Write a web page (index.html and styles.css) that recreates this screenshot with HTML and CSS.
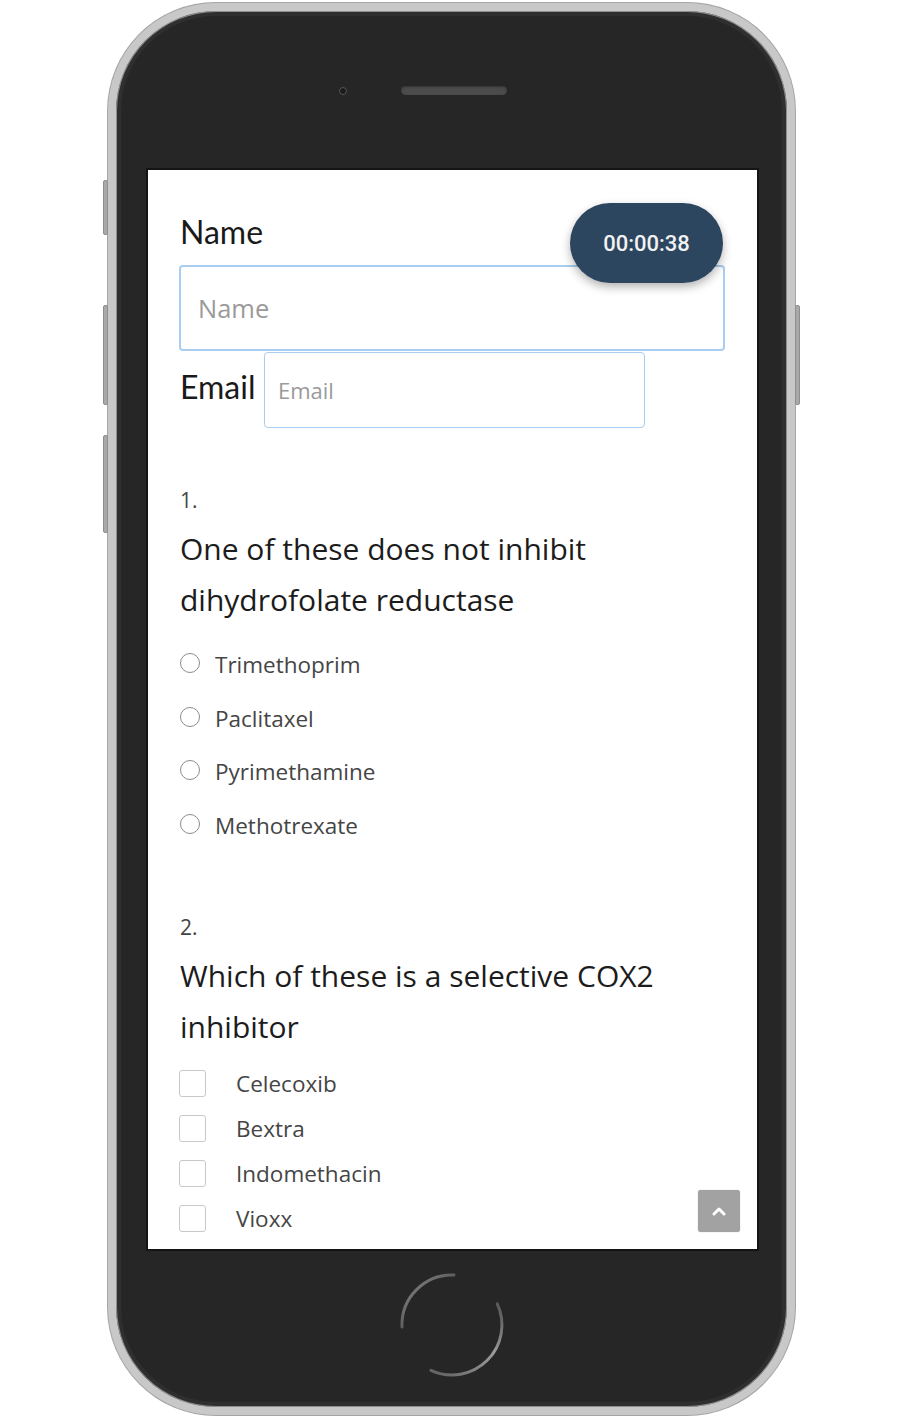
FILE: index.html
```html
<!DOCTYPE html>
<html lang="en">
<head>
<meta charset="utf-8">
<title>Quiz</title>
<link rel="stylesheet" href="styles.css">
</head>
<body>
<div class="phone">
  <span class="side-btn side-l1"></span>
  <span class="side-btn side-l2"></span>
  <span class="side-btn side-l3"></span>
  <span class="side-btn side-r1"></span>
  <div class="bezel-top">
    <span class="camera"></span>
    <span class="speaker"></span>
  </div>
  <div class="screen">
    <div class="timer">00:00:38</div>
    <label class="field-label">Name</label>
    <div class="input input-name">Name</div>
    <div class="email-row">
      <label class="field-label email-label">Email</label>
      <div class="input input-email">Email</div>
    </div>

    <div class="q-num q1">1.</div>
    <div class="q-text">One of these does not inhibit dihydrofolate reductase</div>
    <ul class="options radios">
      <li><span class="radio"></span>Trimethoprim</li>
      <li><span class="radio"></span>Paclitaxel</li>
      <li><span class="radio"></span>Pyrimethamine</li>
      <li><span class="radio"></span>Methotrexate</li>
    </ul>

    <div class="q-num q2">2.</div>
    <div class="q-text">Which of these is a selective COX2 inhibitor</div>
    <ul class="options checks">
      <li><span class="check"></span>Celecoxib</li>
      <li><span class="check"></span>Bextra</li>
      <li><span class="check"></span>Indomethacin</li>
      <li><span class="check"></span>Vioxx</li>
    </ul>

    <div class="to-top">
      <svg width="16" height="10" viewBox="0 0 16 10"><polyline points="3,8 8,3 13,8" fill="none" stroke="#fff" stroke-width="3" stroke-linecap="round" stroke-linejoin="round"/></svg>
    </div>
  </div>
  <div class="bezel-bottom">
    <svg class="home" width="120" height="120" viewBox="0 0 120 120">
      <defs>
        <linearGradient id="g1" x1="0" y1="0" x2="1" y2="1">
          <stop offset="0" stop-color="#8a8a8a"/>
          <stop offset="1" stop-color="#8a8a8a" stop-opacity="0.15"/>
        </linearGradient>
        <linearGradient id="g2" x1="1" y1="0" x2="0" y2="1">
          <stop offset="0" stop-color="#9a9a9a" stop-opacity="0.4"/>
          <stop offset="0.4" stop-color="#9a9a9a"/>
          <stop offset="1" stop-color="#9a9a9a" stop-opacity="0.5"/>
        </linearGradient>
      </defs>
      <path d="M62,10 A50,50 0 0 0 10,62" fill="none" stroke="url(#g1)" stroke-width="3" stroke-linecap="round"/>
      <path d="M105.3,38.9 A50,50 0 0 1 38.9,105.3" fill="none" stroke="url(#g2)" stroke-width="3" stroke-linecap="round"/>
    </svg>
  </div>
</div>
</body>
</html>
```

FILE: styles.css
```css
* { box-sizing: border-box; }
html, body { margin: 0; padding: 0; background: #fff; }
body { width: 900px; height: 1418px; overflow: hidden; }

.phone {
  position: relative;
  margin: 3px 0 0 108px;
  width: 687px;
  height: 1412px;
  border: 8px solid #c8c8c8;
  border-radius: 108px;
  background: #262626;
  box-shadow: 0 0 0 1px #a5a5a5, inset 0 0 0 1px #8d8d8d, inset 0 0 0 5px #2f2f2f;
  display: flex;
  flex-direction: column;
}

.side-btn {
  position: absolute;
  width: 5px;
  background: #a9a9a9;
  border: 1px solid #8e8e8e;
  border-radius: 2px;
}
.side-l1 { left: -13px; top: 169px; height: 55px; }
.side-l2 { left: -13px; top: 294px; height: 100px; }
.side-l3 { left: -13px; top: 424px; height: 98px; }
.side-r1 { right: -13px; top: 294px; height: 100px; }

.bezel-top {
  height: 159px;
  display: flex;
  align-items: center;
  padding-left: 223px;
  gap: 54px;
}
.camera {
  width: 8px;
  height: 8px;
  border-radius: 50%;
  background: #1c1c1c;
  border: 1px solid #555;
}
.speaker {
  width: 106px;
  height: 9px;
  border-radius: 5px;
  background: #4b4b4b;
  box-shadow: inset 0 1px 2px #333;
}

.screen {
  position: relative;
  margin: 0 30px 0 32px;
  height: 1079px;
  background: #fff;
  box-shadow: 0 0 0 2px #141414;
  overflow: hidden;
  padding: 0 31px;
  font-family: "Open Sans", "Noto Sans", sans-serif;
  color: #222;
}

.timer {
  position: absolute;
  left: 422px;
  top: 33px;
  width: 153px;
  height: 80px;
  border-radius: 40px;
  background: #2d4660;
  color: #f2f2f2;
  font-family: Roboto, "Liberation Sans", sans-serif;
  font-size: 22px;
  font-weight: 500;
  display: flex;
  align-items: center;
  justify-content: center;
  box-shadow: 0 4px 10px rgba(0,0,0,0.3);
  z-index: 2;
}

.field-label {
  display: block;
  font-family: Lato, "Open Sans", sans-serif;
  font-size: 32px;
  line-height: 36px;
  color: #1a1a1a;
  margin-top: 44px;
  padding-left: 1px;
}
.input {
  border: 2px solid #a8cdef;
  border-radius: 4px;
  color: #9a9a9a;
  display: flex;
  align-items: center;
  background: #fff;
}
.input-name {
  margin-top: 15px;
  width: 546px;
  height: 86px;
  padding-left: 17px;
  font-size: 25.5px;
}
.email-row {
  margin-top: 1px;
  display: flex;
  align-items: center;
}
.email-label {
  margin-top: 0;
  padding-bottom: 6px;
  width: 85px;
}
.input-email {
  width: 381px;
  height: 76px;
  padding-left: 13px;
  font-size: 22px;
  border-width: 1.5px;
}

.q-num {
  font-size: 21px;
  line-height: 30px;
  color: #444;
  padding-left: 1px;
}
.q1 { margin-top: 57px; }
.q2 { margin-top: 60px; }
.q-text {
  margin-top: 8px;
  font-size: 30px;
  line-height: 51px;
  color: #1c1c1c;
  width: 500px;
  padding-left: 1px;
}

.options {
  list-style: none;
  margin: 13px 0 0;
  padding: 0;
  font-size: 22.5px;
  color: #454545;
}
.radios li {
  display: flex;
  align-items: center;
  height: 53.6px;
  padding-left: 1px;
}
.radio {
  width: 20px;
  height: 20px;
  border-radius: 50%;
  border: 1.5px solid #8c8c8c;
  margin-right: 15px;
  margin-top: -3px;
}
.checks { margin-top: 8px; }
.checks li {
  display: flex;
  align-items: center;
  height: 45.3px;
}
.check {
  width: 27px;
  height: 27px;
  border: 1.5px solid #c9c9c9;
  border-radius: 3px;
  margin-right: 30px;
}

.to-top {
  position: absolute;
  right: 17px;
  bottom: 17px;
  width: 42px;
  height: 42px;
  background: #a2a2a2;
  border-radius: 3px;
  display: flex;
  align-items: center;
  justify-content: center;
  box-shadow: 0 0 1px rgba(0,0,0,0.4);
}

.bezel-bottom {
  flex: 1;
  display: flex;
  align-items: center;
  justify-content: center;
  padding-bottom: 6px;
}
```
